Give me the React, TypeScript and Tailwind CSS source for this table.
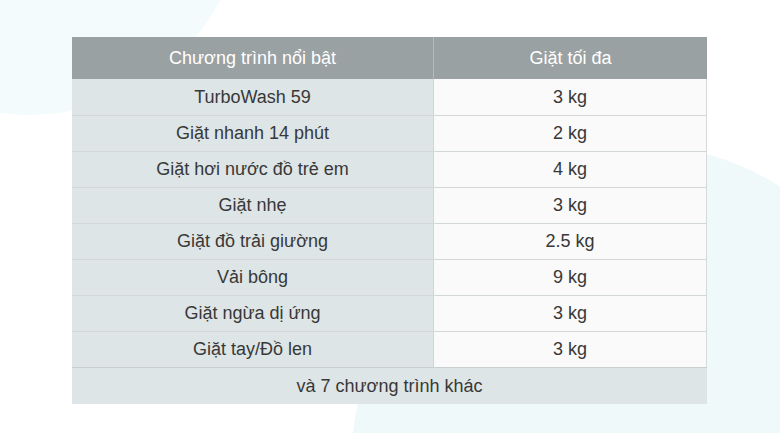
const rows: [string, string][] = [
  ["TurboWash 59", "3 kg"],
  ["Giặt nhanh 14 phút", "2 kg"],
  ["Giặt hơi nước đồ trẻ em", "4 kg"],
  ["Giặt nhẹ", "3 kg"],
  ["Giặt đồ trải giường", "2.5 kg"],
  ["Vải bông", "9 kg"],
  ["Giặt ngừa dị ứng", "3 kg"],
  ["Giặt tay/Đồ len", "3 kg"],
];

export default function App() {
  return (
    <div
      className="relative w-[780px] h-[433px] overflow-hidden bg-white"
      style={{ fontFamily: '"Liberation Sans", Arial, sans-serif' }}
    >
      {/* background blobs */}
      <div className="absolute left-[-185px] top-[-315px] w-[430px] h-[430px] rounded-full bg-[#f4fbfc]" />
      <div className="absolute left-[350px] top-[145px] w-[580px] h-[670px] rounded-[50%] bg-[#eff9fa]" />

      <div className="relative pt-[37px] pl-[72px]">
        <div className="w-[635px] text-[18px] text-[#383838]">
          <div className="grid grid-cols-[362px_273px] h-[42px] bg-[#9aa1a2] text-white">
            <div className="flex items-center justify-center border-r border-[#b4babb]">Chương trình nổi bật</div>
            <div className="flex items-center justify-center">Giặt tối đa</div>
          </div>
          {rows.map(([name, kg], i) => (
            <div
              key={name}
              className={`grid grid-cols-[362px_273px] h-[36px] ${i > 0 ? "border-t border-[#d3d8d9]" : ""}`}
            >
              <div className="flex items-center justify-center bg-[#dde5e6] border-r border-[#cfd5d6]">{name}</div>
              <div className="flex items-center justify-center bg-[#fafafa] border-r border-[#d6dadb]">{kg}</div>
            </div>
          ))}
          <div className="flex items-center justify-center h-[37px] bg-[#dde5e6] border-t border-[#c9cfd0]">
            và 7 chương trình khác
          </div>
        </div>
      </div>
    </div>
  );
}
